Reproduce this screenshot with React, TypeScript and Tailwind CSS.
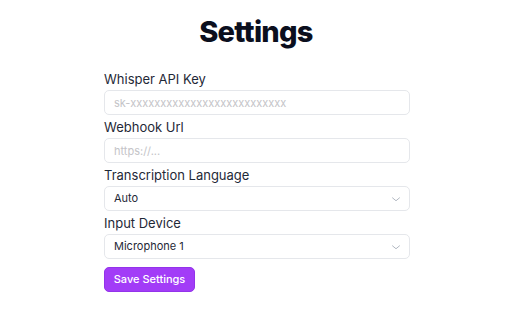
import React from 'react';

const Chevron = () => (
  <svg className="absolute right-[7px] top-1/2 -translate-y-1/2 h-[14px] w-[14px] text-gray-400 pointer-events-none" viewBox="0 0 24 24" fill="none" stroke="currentColor" strokeWidth="1.3" strokeLinecap="round" strokeLinejoin="round">
    <path d="M6 10l6 5 6-5" />
  </svg>
);

const Field: React.FC<{ label: string; children: React.ReactNode }> = ({ label, children }) => (
  <div className="flex flex-col">
    <label className="text-[13px] leading-[16px] text-[#1f2937] mb-[3px]">{label}</label>
    {children}
  </div>
);

export default function App() {
  return (
    <div className="w-[512px] h-[320px] bg-white flex flex-col items-center" style={{ fontFamily: 'Inter, "Noto Sans", sans-serif' }}>
      <h1 className="text-[29px] leading-[36px] font-extrabold text-[#0b0f1e] mt-[14px] tracking-tight">Settings</h1>
      <div className="w-[306px] ml-[2px] flex flex-col gap-[4px] mt-[21px]">
        <Field label="Whisper API Key">
          <input
            className="h-[25px] w-full rounded-[5px] border border-[#e5e7eb] px-[9px] text-[11px] text-gray-700 placeholder:text-[#c4c4c8] outline-none"
            placeholder="sk-xxxxxxxxxxxxxxxxxxxxxxxxxx"
          />
        </Field>
        <Field label="Webhook Url">
          <input
            className="h-[25px] w-full rounded-[5px] border border-[#e5e7eb] px-[9px] text-[11px] text-gray-700 placeholder:text-[#c4c4c8] outline-none"
            placeholder="https://..."
          />
        </Field>
        <Field label="Transcription Language">
          <div className="relative">
            <div className="h-[25px] w-full rounded-[5px] border border-[#e5e7eb] px-[9px] text-[11px] text-[#1f2937] flex items-center">Auto</div>
            <Chevron />
          </div>
        </Field>
        <Field label="Input Device">
          <div className="relative">
            <div className="h-[25px] w-full rounded-[5px] border border-[#e5e7eb] px-[9px] text-[11px] text-[#1f2937] flex items-center">Microphone 1</div>
            <Chevron />
          </div>
        </Field>
        <button className="mt-[4px] self-start h-[25px] w-[91px] rounded-[5px] bg-[#a23cf7] border border-[#9333ea] text-white text-[11px] font-medium">
          Save Settings
        </button>
      </div>
    </div>
  );
}
